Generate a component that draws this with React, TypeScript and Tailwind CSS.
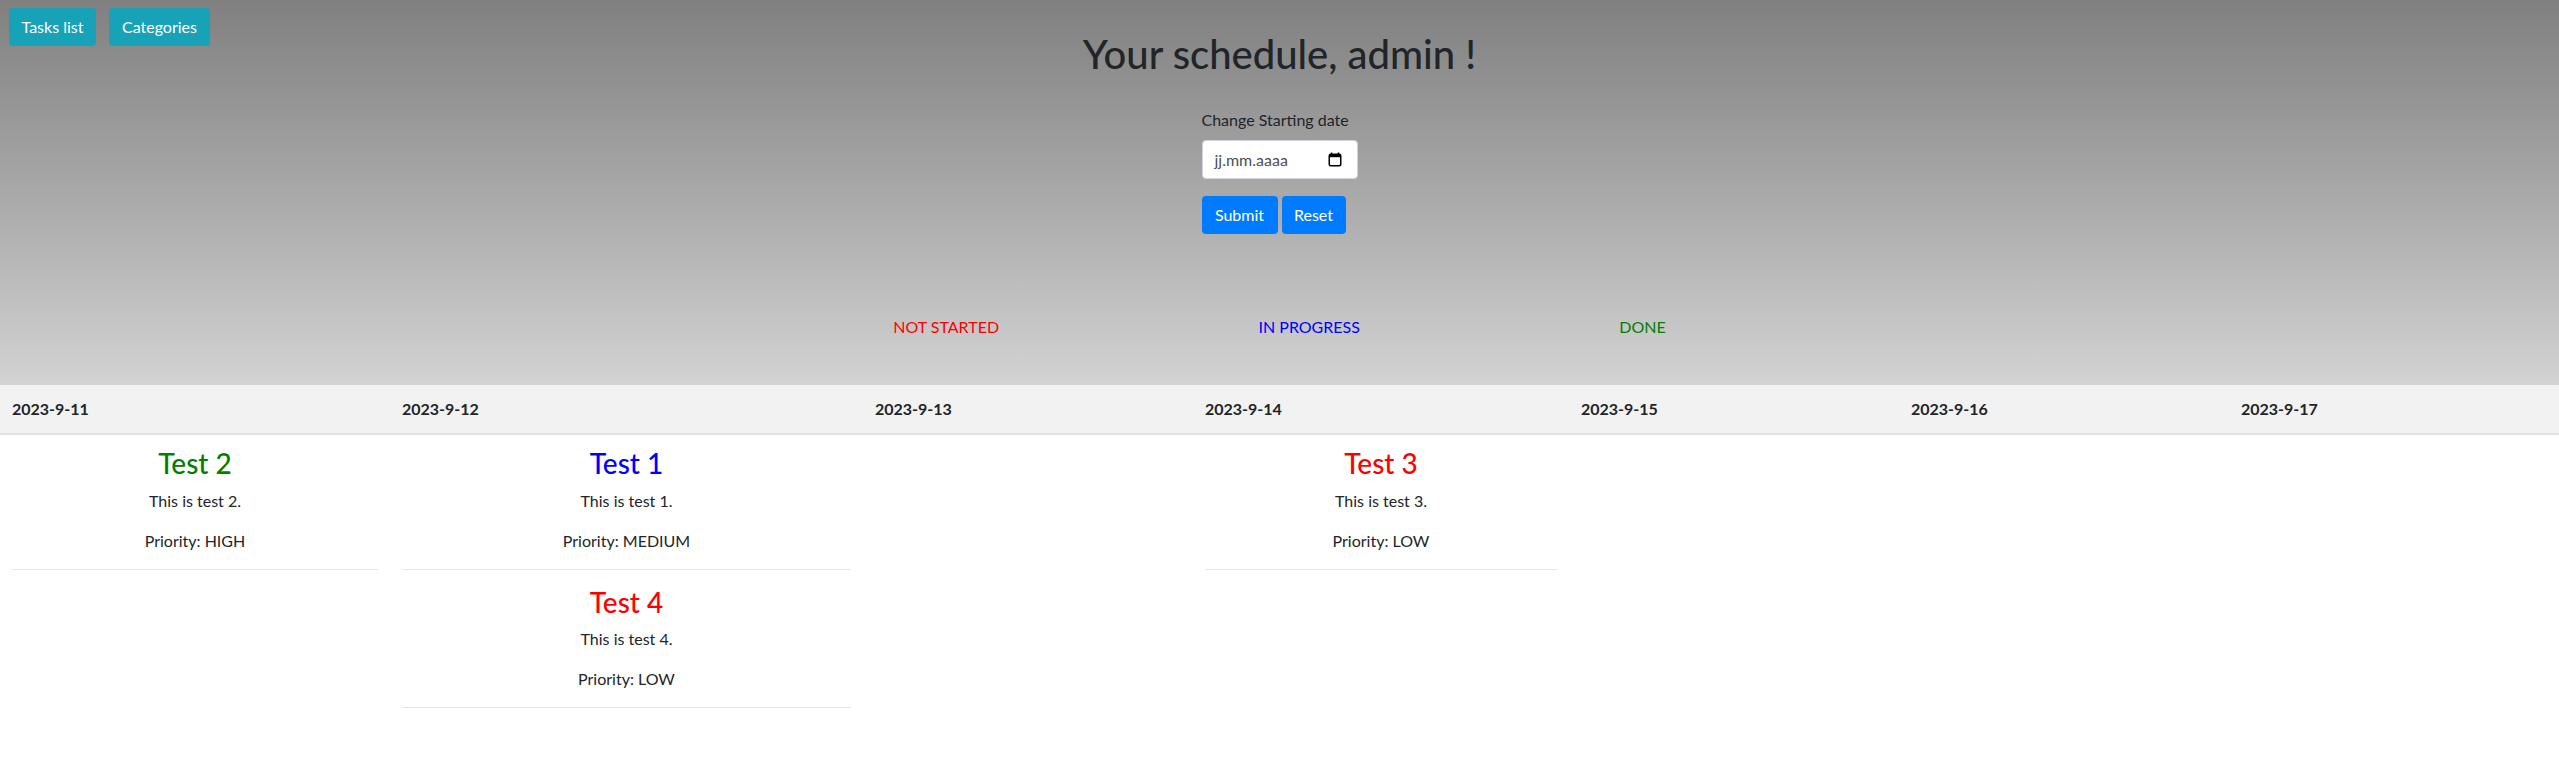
import React from "react";

type Task = { title: string; desc: string; priority: string; color: string };

const days: { date: string; w: string; tasks: Task[] }[] = [
  { date: "2023-9-11", w: "w-[390px]", tasks: [{ title: "Test 2", desc: "This is test 2.", priority: "HIGH", color: "text-[#008000]" }] },
  {
    date: "2023-9-12",
    w: "w-[473px]",
    tasks: [
      { title: "Test 1", desc: "This is test 1.", priority: "MEDIUM", color: "text-[#0000ff]" },
      { title: "Test 4", desc: "This is test 4.", priority: "LOW", color: "text-[#ff0000]" },
    ],
  },
  { date: "2023-9-13", w: "w-[330px]", tasks: [] },
  { date: "2023-9-14", w: "w-[376px]", tasks: [{ title: "Test 3", desc: "This is test 3.", priority: "LOW", color: "text-[#ff0000]" }] },
  { date: "2023-9-15", w: "w-[330px]", tasks: [] },
  { date: "2023-9-16", w: "w-[330px]", tasks: [] },
  { date: "2023-9-17", w: "w-[330px]", tasks: [] },
];

function CalendarIcon() {
  return (
    <svg width="14" height="15" viewBox="0 0 14 15" fill="none">
      <rect x="1.25" y="2.25" width="11.5" height="11.5" rx="1.5" stroke="#000" strokeWidth="1.5" />
      <rect x="1" y="2" width="12" height="3.2" fill="#000" />
      <path d="M3.5 0.5v2M10.5 0.5v2" stroke="#000" strokeWidth="1.5" />
    </svg>
  );
}

export default function App() {
  return (
    <div className="min-h-screen bg-white font-['Segoe_UI',Lato,'Liberation_Sans',sans-serif] text-[16px] leading-6 text-[#212529]">
      <header className="bg-gradient-to-b from-[#808080] to-[#d3d3d3] pb-[46px]">
        <div className="grid grid-cols-[1fr_auto_1fr]">
          <div className="flex items-start gap-[13px] pl-[9px] pt-[8px]">
            <button className="h-[38px] w-[87px] rounded-[4px] bg-[#17a2b8] text-white">Tasks list</button>
            <button className="h-[38px] w-[101px] rounded-[4px] bg-[#17a2b8] text-white">Categories</button>
          </div>
          <h1 className="mt-[30px] text-[40px] font-medium leading-[48px] text-[#212529]">Your schedule, admin !</h1>
          <div />
        </div>
        <div className="mt-[30px] flex justify-center">
          <div className="flex w-[156px] flex-col items-start">
            <label className="mb-2 whitespace-nowrap">Change Starting date</label>
            <div className="flex h-[39px] w-[156px] items-center justify-between rounded-[4px] border border-[#ced4da] bg-white pl-[12px] pr-[15px] text-[#495057]">
              <span>jj.mm.aaaa</span>
              <CalendarIcon />
            </div>
            <div className="mt-[17px] flex gap-[4px]">
              <button className="h-[38px] w-[76px] rounded-[4px] bg-[#007bff] text-white">Submit</button>
              <button className="h-[38px] w-[64px] rounded-[4px] bg-[#007bff] text-white">Reset</button>
            </div>
          </div>
        </div>
        <div className="mx-auto mt-[81px] flex w-[1032px] justify-around">
          <span className="text-[#ff0000]">NOT STARTED</span>
          <span className="text-[#0000ff]">IN PROGRESS</span>
          <span className="text-[#008000]">DONE</span>
        </div>
      </header>
      <table className="w-full table-fixed border-collapse">
        <colgroup>
          {days.map((d) => (
            <col key={d.date} className={d.w} />
          ))}
        </colgroup>
        <thead>
          <tr className="bg-[#f2f2f2]">
            {days.map((d) => (
              <th key={d.date} className="border-b-2 border-[#dee2e6] p-3 text-left font-bold">
                {d.date}
              </th>
            ))}
          </tr>
        </thead>
        <tbody>
          <tr>
            {days.map((d) => (
              <td key={d.date} className="p-3 align-top">
                {d.tasks.map((t) => (
                  <div key={t.title} className="text-center">
                    <h3 className={`mb-2 text-[28px] font-medium leading-[1.2] ${t.color}`}>{t.title}</h3>
                    <p className="mb-4">{t.desc}</p>
                    <p className="mb-4">Priority: {t.priority}</p>
                    <hr className="my-4 border-t border-[#e6e6e6]" />
                  </div>
                ))}
              </td>
            ))}
          </tr>
        </tbody>
      </table>
    </div>
  );
}
